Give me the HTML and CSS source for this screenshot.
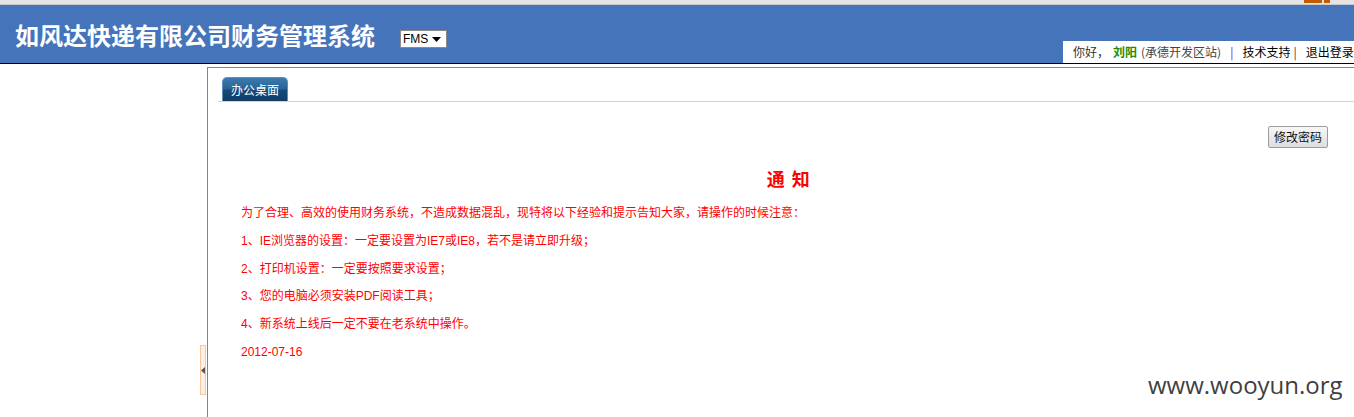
FILE: index.html
```html
<!DOCTYPE html>
<html lang="zh-CN">
<head>
<meta charset="utf-8">
<title>如风达快递有限公司财务管理系统</title>
<link rel="stylesheet" href="styles.css">
</head>
<body>
<div class="topbar"><span class="tb-mark tb-a"></span><span class="tb-mark tb-b"></span></div>
<header class="header">
  <h1 class="sys-title">如风达快递有限公司财务管理系统</h1>
  <div class="sys-select"><span>FMS</span><svg width="9" height="5" viewBox="0 0 9 5"><path d="M0 0H9L4.5 5Z" fill="#000"/></svg></div>
  <div class="userbar"><span class="hello">你好，</span><b class="uname">刘阳</b><span class="ustation">(承德开发区站)</span><span class="sep">|</span><span class="ulink">技术支持</span><span class="sep2">|</span><span class="ulink ulast">退出登录</span></div>
</header>
<div class="main">
  <aside class="sidebar"></aside>
  <div class="toggle-col"><div class="toggle"><svg width="4" height="7" viewBox="0 0 4 7"><path d="M4 0V7L0 3.5Z" fill="#555"/></svg></div></div>
  <section class="frame">
    <div class="tabs"><div class="tab">办公桌面</div></div>
    <div class="toolbar"><button class="btn">修改密码</button></div>
    <div class="notice">
      <h2 class="notice-title">通 知</h2>
      <p>为了合理、高效的使用财务系统，不造成数据混乱，现特将以下经验和提示告知大家，请操作的时候注意：</p>
      <p>1、IE浏览器的设置：一定要设置为IE7或IE8，若不是请立即升级；</p>
      <p>2、打印机设置：一定要按照要求设置；</p>
      <p>3、您的电脑必须安装PDF阅读工具；</p>
      <p>4、新系统上线后一定不要在老系统中操作。</p>
      <p>2012-07-16</p>
    </div>
  </section>
</div>
<div class="watermark">www.wooyun.org</div>
</body>
</html>
```

FILE: styles.css
```css
html, body {
  margin: 0;
  padding: 0;
  background: #fff;
  font-family: "Liberation Sans", "Noto Sans CJK SC", sans-serif;
  font-size: 12px;
  overflow: hidden;
}

.topbar {
  height: 4px;
  background: #e4e4e4;
  border-bottom: 1px solid #c9c9c9;
  display: flex;
  justify-content: flex-end;
  padding-right: 24px;
  gap: 2px;
}
.tb-mark {
  height: 3px;
  background: #c25c00;
}
.tb-a { width: 18px; }
.tb-b { width: 6px; }

.header {
  height: 58px;
  background: #4574bb;
  border-bottom: 1px solid #000;
  display: flex;
  align-items: flex-start;
}
.sys-title {
  margin: 18px 0 0 15px;
  font-family: "Noto Sans CJK SC", sans-serif;
  font-size: 24px;
  line-height: 24px;
  font-weight: bold;
  color: #fff;
}
.sys-select {
  margin: 25px 0 0 25px;
  width: 43px;
  height: 16px;
  background: #fff;
  border: 1px solid #8a8a8a;
  display: flex;
  align-items: center;
  gap: 4px;
  padding-left: 2px;
  font-size: 12px;
  color: #000;
}
.sys-select span { line-height: 16px; }

.userbar {
  margin-left: auto;
  align-self: flex-end;
  width: 281px;
  height: 22px;
  padding-left: 10px;
  background: #fff;
  line-height: 22px;
  white-space: nowrap;
  overflow: hidden;
  color: #333;
  font-family: "Noto Sans CJK SC", sans-serif;
  font-size: 12px;
  display: flex;
}
.hello { width: 40px; flex: none; }
.uname { color: #228b00; font-weight: bold; flex: none; }
.ustation { color: #444; margin-left: 4px; flex: none; }
.sep { color: #8b0a8b; margin-left: 9px; flex: none; }
.sep2 { color: #333; margin-left: 3px; flex: none; }
.ulink { color: #000; margin-left: 9px; flex: none; }
.ulast { margin-left: 9px; }

.main {
  display: flex;
  padding-top: 3px;
  height: 350px;
}
.sidebar {
  width: 200px;
  flex: none;
}
.toggle-col {
  width: 7px;
  flex: none;
}
.toggle {
  margin-top: 278px;
  width: 4px;
  height: 48px;
  border: 1px solid #f7c69a;
  background: #fcf0e6;
  display: flex;
  align-items: center;
  justify-content: center;
}

.frame {
  flex: 1;
  border-left: 1px solid #b8754a;
  border-top: 1px solid #b8754a;
}
.tabs {
  margin-left: 10px;
  padding: 9px 0 0 4px;
  border-bottom: 1px solid #d3d3d3;
  display: flex;
}
.tab {
  width: 64px;
  height: 23px;
  border: 1px solid #5f8fbc;
  border-bottom: none;
  border-radius: 5px 5px 0 0;
  background: linear-gradient(#3b7aaf 0%, #2a6394 48%, #164a78 52%, #0f3e69 100%);
  color: #fff;
  text-align: center;
  line-height: 24px;
  font-family: "Noto Sans CJK SC", sans-serif;
  font-size: 12px;
}

.toolbar {
  display: flex;
  justify-content: flex-end;
  padding-right: 26px;
  margin-top: 24px;
}
.btn {
  width: 60px;
  height: 22px;
  padding: 0;
  border: 1px solid #9c9c9c;
  border-radius: 2px;
  background: linear-gradient(#f7f7f7, #dedede);
  font-family: "Noto Sans CJK SC", sans-serif;
  font-size: 12px;
  color: #111;
  line-height: 20px;
}

.notice {
  padding: 0 17px 0 33px;
  color: #ff0000;
  font-family: "Liberation Sans", "Noto Sans CJK SC", sans-serif;
}
.notice-title {
  margin: 20px 0 0 0;
  text-align: center;
  font-family: "Noto Sans CJK SC", sans-serif;
  font-size: 18px;
  line-height: 20px;
  font-weight: bold;
  letter-spacing: 1.5px;
  color: #f00;
}
.notice p {
  margin: 0;
  line-height: 27.75px;
  font-size: 12px;
}
.notice-title + p { margin-top: 12px; }

.watermark {
  position: absolute;
  left: 1148px;
  top: 369px;
  font-family: "Open Sans", sans-serif;
  font-size: 24px;
  color: #3f3f3f;
  line-height: 32px;
}
```
